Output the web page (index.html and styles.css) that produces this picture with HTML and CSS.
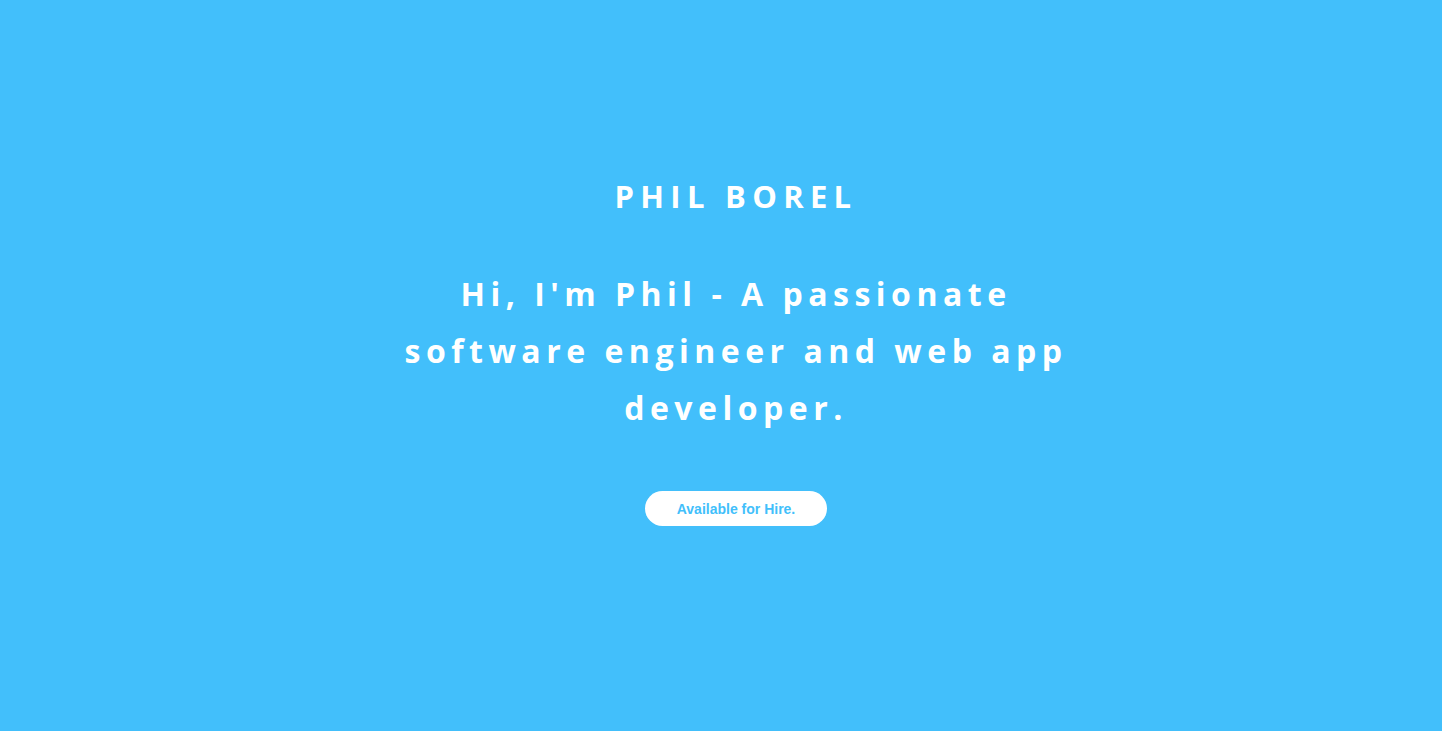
FILE: index.html
```html
<!DOCTYPE html>
<html>
<head>
<meta charset="utf-8">
<link rel="stylesheet" href="styles.css">
</head>
<body>
<main class="hero">
  <h1 class="name">PHIL BOREL</h1>
  <p class="intro">Hi, I'm Phil - A passionate software engineer and web app developer.</p>
  <a class="hire" href="#">Available for Hire.</a>
</main>
</body>
</html>
```
FILE: styles.css
```css
html, body {
  margin: 0;
  padding: 0;
  height: 100%;
}
body {
  background: #42bffb;
  font-family: "Open Sans", "Lato", sans-serif;
  color: #fff;
}
.hero {
  height: 731px;
  box-sizing: border-box;
  padding-top: 176px;
  padding-left: 30px;
  display: flex;
  flex-direction: column;
  align-items: center;
}
.name {
  margin: 0;
  font-size: 31px;
  font-weight: 700;
  letter-spacing: 6.3px;
  line-height: 40px;
}
.intro {
  margin: 49px 0 0 0;
  width: 700px;
  text-align: center;
  font-size: 32px;
  font-weight: 700;
  letter-spacing: 5.5px;
  line-height: 57px;
}
.hire {
  margin-top: 55px;
  width: 182px;
  height: 35px;
  border-radius: 18px;
  background: #fff;
  color: #42bffb;
  font-family: "Liberation Sans", Arial, sans-serif;
  font-weight: bold;
  font-size: 14px;
  text-decoration: none;
  display: flex;
  align-items: center;
  justify-content: center;
}
```
